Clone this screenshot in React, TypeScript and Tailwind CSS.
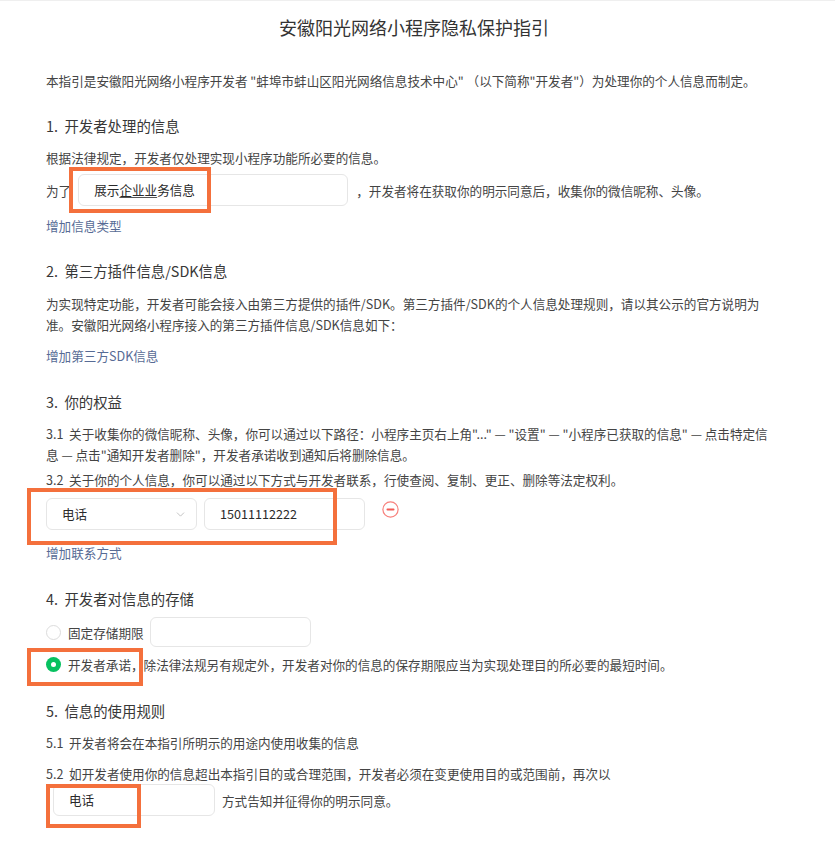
import { ChevronDown } from 'lucide-react';

const linkCls = 'text-[12.6px] leading-[21px] text-[#576b95]';
const textCls = 'text-[12.6px] leading-[21px] text-[#444]';
const headCls = 'text-[14.4px] leading-[22px] text-[#383838]';
const inputCls =
  'h-[32px] rounded-[6px] border border-[#e6e6e6] bg-white flex items-center px-[15px] text-[12.6px] text-[#2a2a2a]';

function Highlight({ className }: { className: string }) {
  return <div className={`absolute border-[4px] border-[#f4703c] pointer-events-none ${className}`} />;
}

function Radio({ checked }: { checked?: boolean }) {
  if (checked) {
    return (
      <span className="w-[15px] h-[15px] rounded-full bg-[#07c160] flex items-center justify-center shrink-0">
        <span className="w-[5px] h-[5px] rounded-full bg-white" />
      </span>
    );
  }
  return <span className="w-[15px] h-[15px] rounded-full border border-[#dcdcdc] bg-white shrink-0" />;
}

function MinusIcon() {
  return (
    <svg width="17" height="17" viewBox="0 0 17 17" className="shrink-0">
      <circle cx="8.5" cy="8.5" r="7.6" fill="none" stroke="#f7807c" strokeWidth="1.2" />
      <rect x="4.5" y="7.6" width="8" height="1.9" rx="0.9" fill="#f25a55" />
    </svg>
  );
}

export default function App() {
  return (
    <div className="relative w-[835px] h-[845px] bg-white overflow-hidden border-t border-[#efefef] font-['Microsoft_YaHei','Noto_Sans_CJK_SC',sans-serif]">
      <div className="ml-[46px] w-[730px]">
        <h1 className="pt-[14px] pl-[6px] text-center text-[18px] leading-[24px] text-[#333] font-normal">
          安徽阳光网络小程序隐私保护指引
        </h1>

        <p className={`mt-[31px] ${textCls}`}>
          本指引是安徽阳光网络小程序开发者 "蚌埠市蚌山区阳光网络信息技术中心" （以下简称"开发者"）为处理你的个人信息而制定。
        </p>

        {/* 1 */}
        <div className={`mt-[24px] ${headCls}`}>1.&nbsp;&nbsp;开发者处理的信息</div>
        <p className={`mt-[10px] ${textCls}`}>根据法律规定，开发者仅处理实现小程序功能所必要的信息。</p>
        <div className="mt-[6px] flex items-center">
          <span className={textCls}>为了</span>
          <div className={`ml-[7px] w-[270px] ${inputCls}`}>
            展示<span className="underline decoration-[#555] underline-offset-2">企业业</span>务信息
          </div>
          <span className={`ml-[8px] ${textCls}`}>，开发者将在获取你的明示同意后，收集你的微信昵称、头像。</span>
        </div>
        <div className={`mt-[9px] ${linkCls}`}>增加信息类型</div>

        {/* 2 */}
        <div className={`mt-[24px] ${headCls}`}>2.&nbsp;&nbsp;第三方插件信息/SDK信息</div>
        <p className={`mt-[11px] ${textCls}`}>
          为实现特定功能，开发者可能会接入由第三方提供的插件/SDK。第三方插件/SDK的个人信息处理规则，请以其公示的官方说明为准。安徽阳光网络小程序接入的第三方插件信息/SDK信息如下：
        </p>
        <div className={`mt-[10px] ${linkCls}`}>增加第三方SDK信息</div>

        {/* 3 */}
        <div className={`mt-[25px] ${headCls}`}>3.&nbsp;&nbsp;你的权益</div>
        <p className={`mt-[10px] ${textCls}`}>
          3.1&nbsp;&nbsp;关于收集你的微信昵称、头像，你可以通过以下路径：小程序主页右上角"..." — "设置" — "小程序已获取的信息" — 点击特定信息 — 点击"通知开发者删除"，开发者承诺收到通知后将删除信息。
        </p>
        <p className={`mt-[4px] ${textCls}`}>
          3.2&nbsp;&nbsp;关于你的个人信息，你可以通过以下方式与开发者联系，行使查阅、复制、更正、删除等法定权利。
        </p>
        <div className="mt-[8px] flex items-center">
          <div className={`w-[151px] justify-between ${inputCls}`}>
            <span>电话</span>
            <ChevronDown className="w-[13px] h-[13px] text-[#b5b5b5] -mr-[6px]" strokeWidth={1.5} />
          </div>
          <div className={`ml-[7px] w-[161px] ${inputCls}`}>15011112222</div>
          <div className="ml-[17px] -mt-[10px]">
            <MinusIcon />
          </div>
        </div>
        <div className={`mt-[12px] ${linkCls}`}>增加联系方式</div>

        {/* 4 */}
        <div className={`mt-[25px] ${headCls}`}>4.&nbsp;&nbsp;开发者对信息的存储</div>
        <div className="mt-[7px] flex items-center">
          <Radio />
          <span className={`ml-[7px] ${textCls}`}>固定存储期限</span>
          <div className="ml-[6px] w-[161px] h-[30px] rounded-[6px] border border-[#e6e6e6]" />
        </div>
        <div className="mt-[7px] flex items-center">
          <Radio checked />
          <span className={`ml-[7px] ${textCls}`}>
            开发者承诺，除法律法规另有规定外，开发者对你的信息的保存期限应当为实现处理目的所必要的最短时间。
          </span>
        </div>

        {/* 5 */}
        <div className={`mt-[25px] ${headCls}`}>5.&nbsp;&nbsp;信息的使用规则</div>
        <p className={`mt-[10px] ${textCls}`}>5.1&nbsp;&nbsp;开发者将会在本指引所明示的用途内使用收集的信息</p>
        <p className={`mt-[10px] ${textCls}`}>
          5.2&nbsp;&nbsp;如开发者使用你的信息超出本指引目的或合理范围，开发者必须在变更使用目的或范围前，再次以
        </p>
        <div className="flex items-center pl-[7px]">
          <div className={`w-[162px] ${inputCls}`}>电话</div>
          <span className={`ml-[7px] ${textCls}`}>方式告知并征得你的明示同意。</span>
        </div>
      </div>

      <Highlight className="left-[69px] top-[166px] w-[142px] h-[46px]" />
      <Highlight className="left-[27px] top-[487px] w-[310px] h-[57px]" />
      <Highlight className="left-[27px] top-[647px] w-[116px] h-[38px]" />
      <Highlight className="left-[46px] top-[783px] w-[95px] h-[44px]" />
    </div>
  );
}
